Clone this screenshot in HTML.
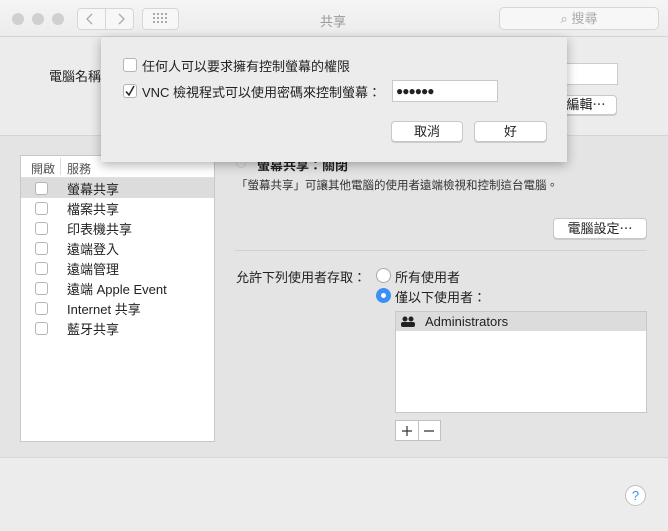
<!DOCTYPE html><html><head><meta charset="utf-8"><style>
*{box-sizing:border-box;margin:0;padding:0}
body{width:668px;height:531px;position:relative;overflow:hidden;background:#ececec;font-family:"Liberation Sans","Noto Sans CJK TC",sans-serif;font-size:13px;color:#222}
.a{position:absolute}
.tb{left:0;top:0;width:668px;height:37px;background:linear-gradient(#f5f5f5,#ececec);border-bottom:1px solid #d4d4d4}
.dot{width:12px;height:12px;border-radius:50%;background:#d0d0d0;top:13px}
.btn{background:#fff;border:1px solid #c8c8c8;border-radius:4px;text-align:center;box-shadow:0 1px 0 #ccc}
.cb{width:13px;height:13px;border:1px solid #b5b5b5;border-radius:3px;background:#fff}
.row{left:0;width:193px;height:20px}
.row .cb{left:14px;top:4px}
.row span{position:absolute;left:46px;top:1px}
</style></head><body>
<div class="a tb"></div>
<div class="a dot" style="left:12px"></div><div class="a dot" style="left:32px"></div><div class="a dot" style="left:52px"></div>
<div class="a" style="left:77px;top:8px;width:57px;height:22px;border:1px solid #d6d6d6;border-radius:4px;background:#f7f7f7"></div>
<div class="a" style="left:105px;top:8px;width:1px;height:22px;background:#d6d6d6"></div>
<svg class="a" style="left:77px;top:8px" width="57" height="22"><path d="M15 6 L10 11 L15 16 M42 6 L47 11 L42 16" stroke="#aaa" stroke-width="1.3" fill="none"/></svg>
<div class="a" style="left:142px;top:8px;width:37px;height:22px;border:1px solid #d6d6d6;border-radius:4px;background:#f7f7f7"></div>
<svg class="a" style="left:153px;top:13px" width="16" height="12"><g fill="#aaa"><rect x="0" y="0" width="2" height="2"/><rect x="4" y="0" width="2" height="2"/><rect x="8" y="0" width="2" height="2"/><rect x="12" y="0" width="2" height="2"/><rect x="0" y="4" width="2" height="2"/><rect x="4" y="4" width="2" height="2"/><rect x="8" y="4" width="2" height="2"/><rect x="12" y="4" width="2" height="2"/><rect x="0" y="8" width="2" height="2"/><rect x="4" y="8" width="2" height="2"/><rect x="8" y="8" width="2" height="2"/><rect x="12" y="8" width="2" height="2"/></g></svg>
<div class="a" style="left:320px;top:11px;color:#999">共享</div>
<div class="a" style="left:499px;top:7px;width:160px;height:23px;border:1px solid #d6d6d6;border-radius:5px;background:#f7f7f7;color:#aaa;text-align:center;line-height:21px">⌕ 搜尋</div>

<div class="a" style="left:49px;top:66px">電腦名稱</div>
<div class="a" style="left:565px;top:63px;width:53px;height:22px;background:#fff;border:1px solid #ccc"></div>
<div class="a btn" style="left:555px;top:95px;width:62px;height:20px;line-height:18px">編輯⋯</div>

<div class="a" style="left:0;top:135px;width:668px;height:323px;background:#e4e4e4;border-top:1px solid #d4d4d4;border-bottom:1px solid #d8d8d8"></div>

<div class="a" style="left:20px;top:155px;width:195px;height:287px;background:#fff;border:1px solid #c8c8c8">
 <div class="a" style="left:0;top:0;width:193px;height:22px;border-bottom:1px solid #e0e0e0;color:#555;font-size:12px"><span class="a" style="left:10px;top:4px">開啟</span><span class="a" style="left:39px;top:2px;width:1px;height:17px;background:#ddd"></span><span class="a" style="left:46px;top:4px">服務</span></div>
 <div class="a row" style="top:22px;background:#dcdcdc"><div class="a cb"></div><span>螢幕共享</span></div>
 <div class="a row" style="top:42px"><div class="a cb"></div><span>檔案共享</span></div>
 <div class="a row" style="top:62px"><div class="a cb"></div><span>印表機共享</span></div>
 <div class="a row" style="top:82px"><div class="a cb"></div><span>遠端登入</span></div>
 <div class="a row" style="top:102px"><div class="a cb"></div><span>遠端管理</span></div>
 <div class="a row" style="top:122px"><div class="a cb"></div><span>遠端 Apple Event</span></div>
 <div class="a row" style="top:142px"><div class="a cb"></div><span>Internet 共享</span></div>
 <div class="a row" style="top:162px"><div class="a cb"></div><span>藍牙共享</span></div>
</div>

<div class="a" style="left:236px;top:158px;width:10px;height:10px;border-radius:50%;border:1px solid #ccc"></div>
<div class="a" style="left:257px;top:155px;font-weight:bold">螢幕共享：關閉</div>
<div class="a" style="left:236px;top:177px;font-size:11.5px;color:#333">「螢幕共享」可讓其他電腦的使用者遠端檢視和控制這台電腦。</div>
<div class="a btn" style="left:553px;top:218px;width:94px;height:21px;line-height:19px">電腦設定⋯</div>
<div class="a" style="left:235px;top:250px;width:412px;height:1px;background:#d0d0d0"></div>
<div class="a" style="left:236px;top:267px">允許下列使用者存取：</div>
<div class="a" style="left:376px;top:268px;width:15px;height:15px;border-radius:50%;border:1px solid #aaa;background:#fff"></div>
<div class="a" style="left:395px;top:267px">所有使用者</div>
<div class="a" style="left:376px;top:288px;width:15px;height:15px;border-radius:50%;background:#3b8ff5"><div class="a" style="left:5px;top:5px;width:5px;height:5px;border-radius:50%;background:#fff"></div></div>
<div class="a" style="left:395px;top:287px">僅以下使用者：</div>
<div class="a" style="left:395px;top:311px;width:252px;height:102px;background:#fff;border:1px solid #c8c8c8">
 <div class="a" style="left:0;top:0;width:250px;height:19px;background:#dcdcdc"></div>
 <svg class="a" style="left:4px;top:4px" width="16" height="12"><g fill="#222"><circle cx="5" cy="3" r="2.5"/><circle cx="11" cy="3" r="2.5"/><rect x="1" y="6" width="8" height="5" rx="2"/><rect x="7" y="6" width="8" height="5" rx="2"/></g></svg>
 <div class="a" style="left:29px;top:2px">Administrators</div>
</div>
<div class="a" style="left:395px;top:420px;width:46px;height:21px;background:#fff;border:1px solid #c0c0c0"><div class="a" style="left:22px;top:0;width:1px;height:19px;background:#c0c0c0"></div>
<svg class="a" style="left:0;top:0" width="44" height="19"><path d="M6 10H16M11 5V15M28 10H38" stroke="#333" stroke-width="1.2"/></svg></div>

<div class="a" style="left:625px;top:485px;width:21px;height:21px;border-radius:50%;background:#fff;border:1px solid #c0c0c0;text-align:center;line-height:19px;color:#3b8ff5;font-size:13px">?</div>

<div class="a" style="left:101px;top:37px;width:466px;height:125px;background:#ececec;box-shadow:0 3px 10px rgba(0,0,0,.3)">
 <div class="a cb" style="left:22px;top:21px;width:14px;height:14px"></div>
 <div class="a" style="left:41px;top:19px">任何人可以要求擁有控制螢幕的權限</div>
 <div class="a cb" style="left:22px;top:47px;width:14px;height:14px"></div>
 <svg class="a" style="left:22px;top:47px" width="14" height="14"><path d="M3 7.5L6 11L11 2" stroke="#222" stroke-width="1.5" fill="none"/></svg>
 <div class="a" style="left:41px;top:45px">VNC 檢視程式可以使用密碼來控制螢幕：</div>
 <div class="a" style="left:291px;top:43px;width:106px;height:22px;background:#fff;border:1px solid #c8c8c8;font-size:12px;line-height:20px;padding-left:3px;letter-spacing:-1px">●●●●●●</div>
 <div class="a btn" style="left:290px;top:84px;width:72px;height:21px;line-height:19px">取消</div>
 <div class="a btn" style="left:373px;top:84px;width:73px;height:21px;line-height:19px">好</div>
</div>
</body></html>
